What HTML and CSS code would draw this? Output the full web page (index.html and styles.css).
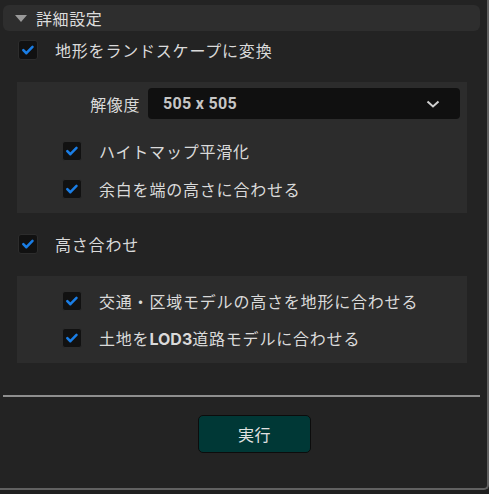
FILE: index.html
```html
<!DOCTYPE html>
<html lang="ja">
<head>
<meta charset="utf-8">
<link rel="stylesheet" href="styles.css">
</head>
<body>
<div class="panel">
  <div class="header">
    <span class="tri"></span>
    <span class="htitle">詳細設定</span>
  </div>

  <div class="row top-row r1">
    <span class="cb"><svg viewBox="0 0 20 20"><path d="M4.8 10.2 L8.2 13.6 L15 6.6"/></svg></span>
    <span class="lbl">地形をランドスケープに変換</span>
  </div>

  <div class="sub sub1">
    <div class="field">
      <span class="flabel">解像度</span>
      <div class="select">
        <span class="sval">505 x 505</span>
        <svg class="chev" viewBox="0 0 14 8"><path d="M1.5 1.5 L7 6.5 L12.5 1.5"/></svg>
      </div>
    </div>
    <div class="row inner r2">
      <span class="cb"><svg viewBox="0 0 20 20"><path d="M4.8 10.2 L8.2 13.6 L15 6.6"/></svg></span>
      <span class="lbl">ハイトマップ平滑化</span>
    </div>
    <div class="row inner r3">
      <span class="cb"><svg viewBox="0 0 20 20"><path d="M4.8 10.2 L8.2 13.6 L15 6.6"/></svg></span>
      <span class="lbl">余白を端の高さに合わせる</span>
    </div>
  </div>

  <div class="row top-row r4">
    <span class="cb"><svg viewBox="0 0 20 20"><path d="M4.8 10.2 L8.2 13.6 L15 6.6"/></svg></span>
    <span class="lbl">高さ合わせ</span>
  </div>

  <div class="sub sub2">
    <div class="row inner">
      <span class="cb"><svg viewBox="0 0 20 20"><path d="M4.8 10.2 L8.2 13.6 L15 6.6"/></svg></span>
      <span class="lbl">交通・区域モデルの高さを地形に合わせる</span>
    </div>
    <div class="row inner r6">
      <span class="cb"><svg viewBox="0 0 20 20"><path d="M4.8 10.2 L8.2 13.6 L15 6.6"/></svg></span>
      <span class="lbl">土地を<b>LOD3</b>道路モデルに合わせる</span>
    </div>
  </div>

  <div class="divider"></div>

  <button class="run">実行</button>
</div>
</body>
</html>
```

FILE: styles.css
```css
html, body {
  margin: 0;
  padding: 0;
  background: #1f1f1f;
}
body {
  width: 489px;
  height: 494px;
  overflow: hidden;
  font-family: Inter, "Noto Sans CJK JP", sans-serif;
  font-size: 16px;
  color: #dadada;
}
.panel {
  box-sizing: border-box;
  width: 489px;
  height: 490px;
  background: #232323;
  border-right: 2px solid #616161;
  border-bottom: 2px solid #616161;
  border-bottom-right-radius: 5px;
  padding-top: 5px;
  display: flex;
  flex-direction: column;
}
.header {
  margin-left: 3px;
  width: 477px;
  height: 26px;
  background: #2e2e2e;
  border-radius: 6px;
  display: flex;
  align-items: center;
}
.tri {
  width: 0;
  height: 0;
  margin-left: 12px;
  border-left: 6px solid transparent;
  border-right: 6px solid transparent;
  border-top: 7px solid #9a9a9a;
}
.htitle {
  margin-left: 9px;
  font-family: "Noto Sans CJK JP", sans-serif;
  font-size: 16px;
  letter-spacing: 0.6px;
  color: #dcdcdc;
}
.row {
  display: flex;
  align-items: center;
  height: 20px;
}
.top-row {
  margin-left: 18px;
}
.r1 { margin-top: 9px; }
.r4 { margin-top: 21px; }
.cb {
  box-sizing: border-box;
  width: 20px;
  height: 20px;
  flex: none;
  background: #111111;
  border: 1px solid #2c2c2c;
  border-radius: 3px;
  display: flex;
}
.cb svg {
  width: 18px;
  height: 18px;
}
.cb path {
  fill: none;
  stroke: #1a7ee6;
  stroke-width: 2.8;
  stroke-linecap: round;
  stroke-linejoin: round;
}
.lbl {
  margin-left: 17px;
  white-space: nowrap;
  letter-spacing: 0.8px;
}
.lbl b {
  font-weight: 700;
  letter-spacing: 0;
}
.sub {
  margin-left: 17px;
  width: 450px;
  background: #2c2c2c;
  box-sizing: border-box;
  display: flex;
  flex-direction: column;
}
.sub1 {
  margin-top: 22px;
  padding-top: 6px;
  padding-bottom: 14px;
}
.sub2 {
  margin-top: 22px;
  padding-top: 15px;
  padding-bottom: 15px;
}
.inner {
  margin-left: 45px;
}
.r2 { margin-top: 22px; }
.r3 { margin-top: 18px; }
.r6 { margin-top: 17px; }
.field {
  display: grid;
  grid-template-columns: 123px 312px;
  column-gap: 8px;
  align-items: center;
  height: 31px;
}
.flabel {
  text-align: right;
  letter-spacing: 0.6px;
}
.select {
  height: 31px;
  background: #101010;
  border-radius: 4px;
  display: flex;
  align-items: center;
  justify-content: space-between;
  padding: 0 20px 0 15px;
}
.sval {
  font-family: Roboto, "Noto Sans CJK JP", sans-serif;
  font-weight: 700;
  color: #c6c6c6;
  letter-spacing: 0.3px;
}
.chev {
  width: 14px;
  height: 8px;
}
.chev path {
  fill: none;
  stroke: #cfcfcf;
  stroke-width: 2;
}
.divider {
  margin-top: 32px;
  margin-left: 3px;
  width: 477px;
  height: 2px;
  background: #8e8e8e;
}
.run {
  margin-top: 18px;
  margin-left: 198px;
  width: 113px;
  height: 38px;
  box-sizing: border-box;
  background: #003836;
  border: 1px solid #0c0c0c;
  border-radius: 5px;
  color: #e2e2e2;
  font-family: "Noto Sans CJK JP", sans-serif;
  font-size: 16px;
  letter-spacing: 0.6px;
  padding: 0;
}
```
